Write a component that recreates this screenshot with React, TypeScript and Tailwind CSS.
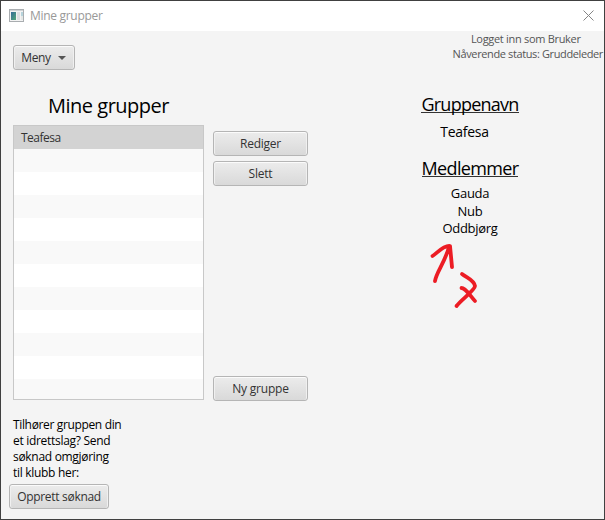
import type { ReactNode } from "react";

function Button({ className, children }: { className: string; children: ReactNode }) {
  return (
    <button
      className={`flex h-[25px] shrink-0 items-center justify-center whitespace-nowrap rounded-[3px] border border-[#b5b5b5] bg-linear-to-b from-[#ececec] to-[#d9d9d9] text-[12px] leading-[16px] text-[#333] shadow-[inset_0_1px_0_#fbfbfb,inset_1px_0_0_#f0f0f0,inset_-1px_0_0_#f0f0f0] ${className}`}
    >
      {children}
    </button>
  );
}

const groups = ["Teafesa", "", "", "", "", "", "", "", "", "", "", ""];

function TitleBar() {
  return (
    <header className="flex h-[30px] shrink-0 items-center bg-white pl-2 pr-[10px]">
      <svg width="15" height="13" viewBox="0 0 15 13" className="mb-[2px] shrink-0">
        <defs>
          <linearGradient id="pane" x1="0" y1="0" x2="1" y2="1">
            <stop offset="0" stopColor="#356b98" />
            <stop offset="1" stopColor="#55a878" />
          </linearGradient>
        </defs>
        <rect x=".5" y=".5" width="14" height="12" fill="#f3f3f3" stroke="#a9adb0" />
        <path d="M1 1.5h13" stroke="#cfd2d4" />
        <rect x="2" y="3" width="5" height="8" fill="url(#pane)" />
        <rect x="8" y="3" width="3" height="8" fill="#dedfe1" />
        <rect x="12" y="3" width="2" height="4" fill="#b6d3db" />
        <rect x="12" y="7" width="2" height="4" fill="#e4e7e5" />
      </svg>
      <h1 className="ml-[6px] text-[12px] leading-[16px] tracking-[-0.3px] text-[#999]">Mine grupper</h1>
      <svg width="11" height="11" viewBox="0 0 11 11" className="mb-[2px] ml-auto" stroke="#858585" fill="none">
        <path d="M.5 .5l10 10M10.5 .5l-10 10" />
      </svg>
    </header>
  );
}

export default function App() {
  return (
    <div className="flex h-[520px] w-[605px] flex-col overflow-hidden border border-[#404040] bg-[#f4f4f4] font-['Open_Sans','Noto_Sans',sans-serif] text-black">
      <TitleBar />
      <main className="flex min-h-0 flex-1">
        <section className="flex w-[311px] shrink-0 flex-col pl-3 pt-[14px]">
          <Button className="w-[62px] gap-[7px] pr-px tracking-[-0.35px]">
            Meny
            <svg width="8" height="4" viewBox="0 0 8 4" fill="#555">
              <path d="M0 0h8L4 4z" />
            </svg>
          </Button>
          <h2 className="mt-[23px] h-[32px] w-[191px] whitespace-nowrap text-center text-[20px] leading-[26px] tracking-[-0.5px]">
            Mine grupper
          </h2>
          <div className="flex">
            <ul className="h-[275px] w-[191px] shrink-0 overflow-hidden border border-[#c8c8c8] bg-white">
              {groups.map((group, i) => (
                <li
                  key={i}
                  className={`flex h-[23px] items-center pl-[7px] text-[12px] tracking-[-0.5px] text-[#333] ${
                    i === 0 ? "bg-[#d3d3d3]" : i % 2 ? "bg-[#f9f9f9]" : "bg-white"
                  }`}
                >
                  {group}
                </li>
              ))}
            </ul>
            <div className="ml-[9px] flex h-[276px] w-[95px] shrink-0 flex-col gap-[5px] pt-[6px]">
              <Button className="tracking-[-0.25px]">Rediger</Button>
              <Button className="tracking-[-0.2px]">Slett</Button>
              <Button className="mt-auto tracking-[-0.2px]">Ny gruppe</Button>
            </div>
          </div>
          <p className="mt-[16px] whitespace-nowrap text-[12px] leading-[16px]">
            <span className="tracking-[-0.35px]">Tilhører gruppen din</span>
            <br />
            <span className="tracking-[-0.3px]">et idrettslag? Send</span>
            <br />
            <span className="tracking-[-0.3px]">søknad omgjøring</span>
            <br />
            <span className="tracking-[-0.3px]">til klubb her:</span>
          </p>
          <Button className="-ml-1 mt-[3px] w-[100px] tracking-[-0.3px]">Opprett søknad</Button>
        </section>
        <section className="flex flex-1 flex-col">
          <div className="mr-px self-end whitespace-nowrap text-center text-[11px] leading-[15px] text-[#555]">
            <p className="pr-[4px] tracking-[-0.3px]">Logget inn som Bruker</p>
            <p className="tracking-[-0.38px]">Nåverende status: Gruddeleder</p>
          </div>
          <div className="ml-[98px] mt-[30px] flex w-[120px] flex-col items-center whitespace-nowrap">
            <h2 className="h-[27px] text-[18px] leading-[26px] tracking-[-0.75px]">
              <span className="inline-block h-[21px] border-b border-[#333] leading-[25px]">Gruppenavn</span>
            </h2>
            <p className="mr-[11px] mt-[4px] text-[14px] leading-[20px] tracking-[-0.3px]">Teafesa</p>
            <h2 className="mt-[13px] h-[27px] text-[18px] leading-[26px] tracking-[-0.65px]">
              <span className="inline-block h-[21px] border-b border-[#333] leading-[25px]">Medlemmer</span>
            </h2>
            <ul className="mt-[3px] flex flex-col items-center text-[13px] leading-[17.5px] tracking-[-0.3px]">
              <li>Gauda</li>
              <li>Nub</li>
              <li>Oddbjørg</li>
            </ul>
            <svg
              width="60"
              height="76"
              viewBox="425 238 60 76"
              className="mr-[31px] mt-px shrink-0"
              fill="none"
              stroke="#ec1c24"
              strokeWidth="3.8"
              strokeLinecap="round"
              strokeLinejoin="round"
            >
              <path d="M435 280C436 272 445 261 449 246M432.500 255C437 252 444 244 450 245L452 266" />
              <path d="M462 273C467 277 474 279 475 285C475 289 461 299 456.500 305M461.500 287C466 287 470 295 475 300" />
            </svg>
          </div>
        </section>
      </main>
    </div>
  );
}
